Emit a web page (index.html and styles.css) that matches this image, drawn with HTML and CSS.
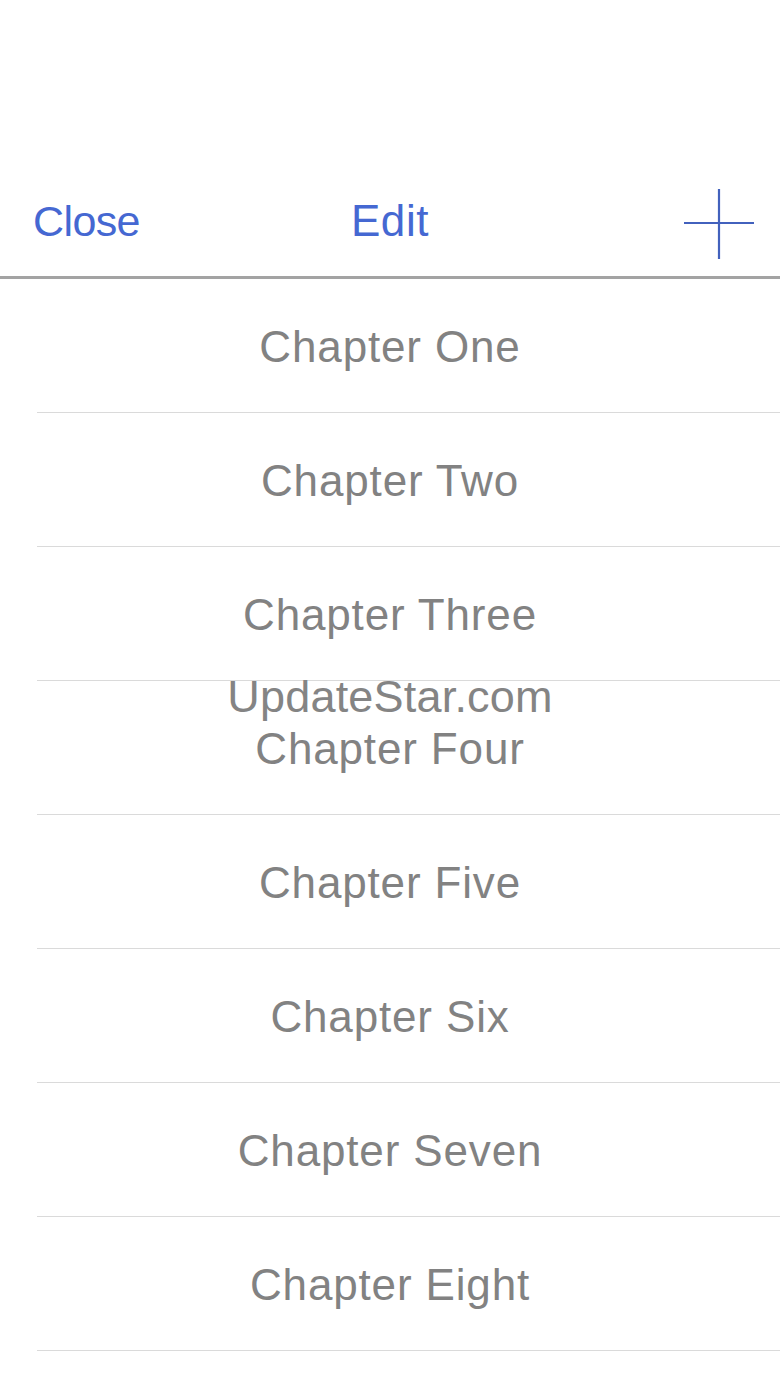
FILE: index.html
```html
<!DOCTYPE html>
<html lang="en">
<head>
<meta charset="utf-8">
<title>Chapters</title>
<link rel="stylesheet" href="styles.css">
</head>
<body>
<div class="screen">
  <header class="nav">
    <span class="nav-btn close">Close</span>
    <span class="nav-btn edit">Edit</span>
    <span class="add">
      <svg width="72" height="72" viewBox="0 0 72 72" aria-hidden="true">
        <path d="M36 1 V71 M1 35 H71" stroke="#4261bd" stroke-width="2.2" fill="none"/>
      </svg>
    </span>
  </header>
  <ul class="list">
    <li class="row"><span>Chapter One</span></li>
    <li class="row"><span>Chapter Two</span></li>
    <li class="row"><span>Chapter Three</span></li>
    <li class="row"><span>Chapter Four</span></li>
    <li class="row"><span>Chapter Five</span></li>
    <li class="row"><span>Chapter Six</span></li>
    <li class="row"><span>Chapter Seven</span></li>
    <li class="row"><span>Chapter Eight</span></li>
    <li class="row"><span></span></li>
  </ul>
  <div class="watermark">UpdateStar.com</div>
</div>
</body>
</html>
```

FILE: styles.css
```css
html, body {
  margin: 0;
  padding: 0;
  background: #ffffff;
}
body {
  font-family: "Liberation Sans", Arial, Helvetica, sans-serif;
  overflow: hidden;
}
.screen {
  position: relative;
  width: 780px;
  height: 1387px;
  overflow: hidden;
}
.nav {
  box-sizing: border-box;
  height: 279px;
  padding: 168px 26px 0 26px;
  display: grid;
  grid-template-columns: 1fr auto 1fr;
  align-items: center;
  border-bottom: 3px solid #a3a3a3;
}
.nav-btn {
  font-size: 43px;
  color: #4568d2;
  line-height: 1;
}
.close {
  justify-self: start;
  margin-left: 7px;
  letter-spacing: -0.6px;
  margin-bottom: 2px;
}
.edit {
  justify-self: center;
  font-size: 44px;
  letter-spacing: 0.6px;
  margin-bottom: 2px;
}
.add {
  justify-self: end;
  display: flex;
  margin-right: -1px;
  margin-top: 4px;
}
.list {
  list-style: none;
  margin: 0;
  padding: 0;
}
.row {
  box-sizing: border-box;
  height: 134px;
  margin-left: 37px;
  padding-right: 37px;
  border-bottom: 1px solid #dadada;
  display: flex;
  align-items: center;
  justify-content: center;
  font-size: 44px;
  letter-spacing: 0.85px;
  color: #828282;
}
.row span {
  margin-top: 3px;
}
.watermark {
  position: absolute;
  left: 0;
  right: 0;
  top: 671px;
  text-align: center;
  font-size: 45px;
  letter-spacing: 0.2px;
  color: #848484;
  line-height: 52px;
}
```
